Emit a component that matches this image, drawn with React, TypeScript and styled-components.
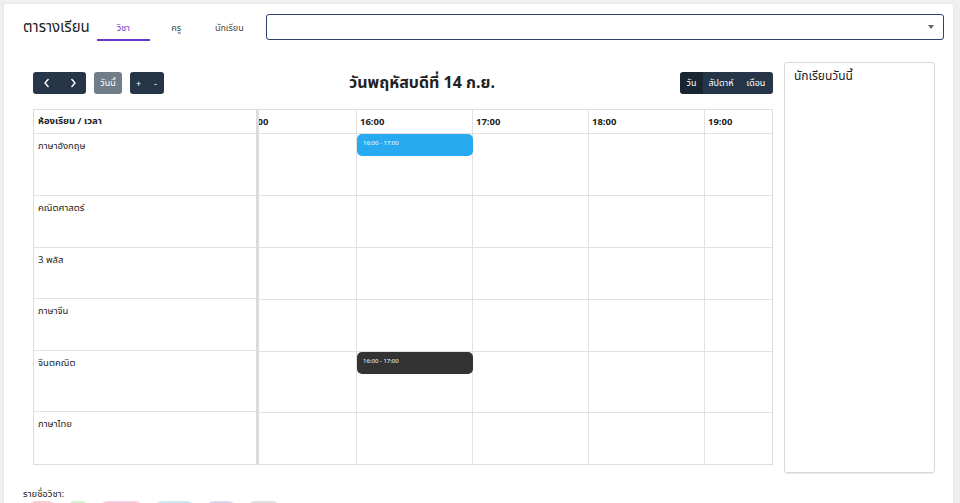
import styled, { createGlobalStyle } from 'styled-components';

const GlobalStyle = createGlobalStyle`
  * { box-sizing: border-box; }
  body {
    margin: 0;
    background: #efefef;
    font-family: 'Noto Sans', 'Noto Sans Thai', 'Noto Sans Thai Looped', sans-serif;
    color: #222;
  }
`;

const Page = styled.div`
  padding: 4px 7px 0 4px;
`;

const Card = styled.div`
  background: #fff;
  border-radius: 3px;
  box-shadow: 0 0 2px rgba(0, 0, 0, 0.08);
  min-height: 560px;
`;

const Header = styled.div`
  height: 46px;
  display: flex;
  align-items: center;
  padding: 0 9px 0 19px;
`;

const Brand = styled.h1`
  margin: 0 7px 0 0;
  font-size: 15px;
  font-weight: 400;
  color: #222;
`;

const Tabs = styled.div`
  display: flex;
  align-self: flex-start;
  margin-top: 8px;
`;

const Tab = styled.div<{ $active?: boolean }>`
  width: 53px;
  height: 29px;
  padding-top: 4px;
  display: flex;
  align-items: center;
  justify-content: center;
  font-size: 9px;
  color: ${(p) => (p.$active ? '#6b35c8' : '#444')};
  border-bottom: 2px solid ${(p) => (p.$active ? '#6b35c8' : 'transparent')};
`;

const Select = styled.div`
  flex: 1;
  height: 26px;
  margin-left: 10px;
  border: 1.5px solid #2d4268;
  border-radius: 3px;
  display: flex;
  align-items: center;
  justify-content: flex-end;
  padding-right: 9px;
`;

const Caret = styled.span`
  width: 0;
  height: 0;
  border-left: 3px solid transparent;
  border-right: 3px solid transparent;
  border-top: 4px solid #666;
`;

const Body = styled.div`
  display: flex;
  gap: 11px;
  padding: 12px 18px 0 29px;
`;

const Main = styled.div`
  width: 740px;
  padding-top: 10px;
`;

const Toolbar = styled.div`
  display: flex;
  align-items: center;
  justify-content: space-between;
  height: 22px;
  margin-bottom: 15px;
`;

const Group = styled.div`
  display: flex;
  gap: 8px;
`;

const BtnGroup = styled.div`
  display: flex;
  border-radius: 3px;
  overflow: hidden;
  height: 22px;
`;

const Btn = styled.button<{ $w: number; $tone?: 'dark' | 'active' | 'muted' }>`
  width: ${(p) => p.$w}px;
  height: 22px;
  border: none;
  padding: 0;
  margin: 0;
  font-family: inherit;
  font-size: 9px;
  color: #fff;
  display: flex;
  align-items: center;
  justify-content: center;
  background: ${(p) =>
    p.$tone === 'active' ? '#1a2532' : p.$tone === 'muted' ? '#717d89' : '#263547'};
`;

const Title = styled.h2`
  margin: 0;
  font-size: 16px;
  font-weight: 700;
  color: #222;
`;

const Table = styled.div`
  border: 1px solid #dedede;
  display: flex;
  height: 356px;
`;

const ResourceCol = styled.div`
  width: 225px;
  flex: none;
  border-right: 3px solid #dcdcdc;
  display: flex;
  flex-direction: column;
`;

const HeadCell = styled.div`
  height: 24px;
  border-bottom: 1px solid #e2e2e2;
  font-size: 9.5px;
  font-weight: 700;
  padding: 0 4px;
  display: flex;
  align-items: center;
`;

const RowCell = styled.div<{ $h: number }>`
  height: ${(p) => p.$h}px;
  border-bottom: 1px solid #e2e2e2;
  font-size: 9.5px;
  padding: 5px 4px;
  &:last-child { border-bottom: none; }
`;

const TimeArea = styled.div`
  flex: 1;
  overflow: hidden;
`;

const TimeInner = styled.div`
  margin-left: -18px;
  display: flex;
  flex-direction: column;
`;

const TimeHead = styled.div`
  display: flex;
  height: 24px;
  border-bottom: 1px solid #e2e2e2;
`;

const TimeLabel = styled.div`
  width: 116px;
  flex: none;
  border-right: 1px solid #e2e2e2;
  font-size: 9.5px;
  font-weight: 700;
  padding: 0 3px;
  display: flex;
  align-items: center;
`;

const TimeRow = styled.div<{ $h: number }>`
  display: flex;
  height: ${(p) => p.$h}px;
  border-bottom: 1px solid #e2e2e2;
  position: relative;
  &:last-child { border-bottom: none; }
`;

const Slot = styled.div`
  width: 116px;
  flex: none;
  border-right: 1px solid #e2e2e2;
`;

const Event = styled.div<{ $bg: string }>`
  position: absolute;
  top: 0;
  left: 116px;
  width: 116px;
  height: 22px;
  background: ${(p) => p.$bg};
  border-radius: 5px;
  color: #fff;
  font-size: 6px;
  padding: 5px 6px;
`;

const Panel = styled.div`
  width: 151px;
  height: 411px;
  border: 1px solid #d8d8d8;
  border-radius: 3px;
  box-shadow: 0 1px 1px rgba(0, 0, 0, 0.08);
  padding: 4px 9px;
`;

const PanelTitle = styled.div`
  font-size: 12px;
`;

const Legend = styled.div`
  padding: 14px 0 0 19px;
`;

const LegendLabel = styled.div`
  font-size: 9.5px;
  margin-bottom: 0;
`;

const Pills = styled.div`
  display: flex;
  gap: 9px;
  padding-left: 4px;
`;

const Pill = styled.div<{ $bg: string; $w: number }>`
  width: ${(p) => p.$w}px;
  height: 18px;
  border-radius: 9px;
  background: ${(p) => p.$bg};
`;

const rows = [
  { name: 'ภาษาอังกฤษ', h: 62, event: '#27aaef' },
  { name: 'คณิตศาสตร์', h: 52 },
  { name: '3 พลัส', h: 52 },
  { name: 'ภาษาจีน', h: 52 },
  { name: 'จินตคณิต', h: 61, event: '#333333' },
  { name: 'ภาษาไทย', h: 52 },
];

const hours = ['15:00', '16:00', '17:00', '18:00', '19:00'];

const pills = [
  { bg: '#f7cdd3', w: 30 },
  { bg: '#d6efcc', w: 24 },
  { bg: '#f7cbe0', w: 45 },
  { bg: '#cde8f6', w: 43 },
  { bg: '#ddd6ee', w: 32 },
  { bg: '#e3dede', w: 35 },
];

const Chevron = ({ dir }: { dir: 'left' | 'right' }) => (
  <svg width="8" height="10" viewBox="0 0 8 10">
    <path
      d={dir === 'left' ? 'M5.5 1 L2 5 L5.5 9' : 'M2.5 1 L6 5 L2.5 9'}
      fill="none"
      stroke="#fff"
      strokeWidth="1.4"
    />
  </svg>
);

const App = () => {
  return (
    <Page>
      <GlobalStyle />
      <Card>
        <Header>
          <Brand>ตารางเรียน</Brand>
          <Tabs>
            <Tab $active>วิชา</Tab>
            <Tab>ครู</Tab>
            <Tab>นักเรียน</Tab>
          </Tabs>
          <Select>
            <Caret />
          </Select>
        </Header>
        <Body>
          <Main>
            <Toolbar>
              <Group>
                <BtnGroup>
                  <Btn $w={27}>
                    <Chevron dir="left" />
                  </Btn>
                  <Btn $w={26}>
                    <Chevron dir="right" />
                  </Btn>
                </BtnGroup>
                <BtnGroup>
                  <Btn $w={28} $tone="muted">
                    วันนี้
                  </Btn>
                </BtnGroup>
                <BtnGroup>
                  <Btn $w={17}>+</Btn>
                  <Btn $w={17}>-</Btn>
                </BtnGroup>
              </Group>
              <Title>วันพฤหัสบดีที่ 14 ก.ย.</Title>
              <BtnGroup>
                <Btn $w={23} $tone="active">
                  วัน
                </Btn>
                <Btn $w={36}>สัปดาห์</Btn>
                <Btn $w={34}>เดือน</Btn>
              </BtnGroup>
            </Toolbar>
            <Table>
              <ResourceCol>
                <HeadCell>ห้องเรียน / เวลา</HeadCell>
                {rows.map((r) => (
                  <RowCell key={r.name} $h={r.h}>
                    {r.name}
                  </RowCell>
                ))}
              </ResourceCol>
              <TimeArea>
                <TimeInner>
                  <TimeHead>
                    {hours.map((h) => (
                      <TimeLabel key={h}>{h}</TimeLabel>
                    ))}
                  </TimeHead>
                  {rows.map((r) => (
                    <TimeRow key={r.name} $h={r.h}>
                      {hours.map((h) => (
                        <Slot key={h} />
                      ))}
                      {r.event && <Event $bg={r.event}>16:00 - 17:00</Event>}
                    </TimeRow>
                  ))}
                </TimeInner>
              </TimeArea>
            </Table>
          </Main>
          <Panel>
            <PanelTitle>นักเรียนวันนี้</PanelTitle>
          </Panel>
        </Body>
        <Legend>
          <LegendLabel>รายชื่อวิชา:</LegendLabel>
          <Pills>
            {pills.map((p, i) => (
              <Pill key={i} $bg={p.bg} $w={p.w} />
            ))}
          </Pills>
        </Legend>
      </Card>
    </Page>
  );
};

export default App;
